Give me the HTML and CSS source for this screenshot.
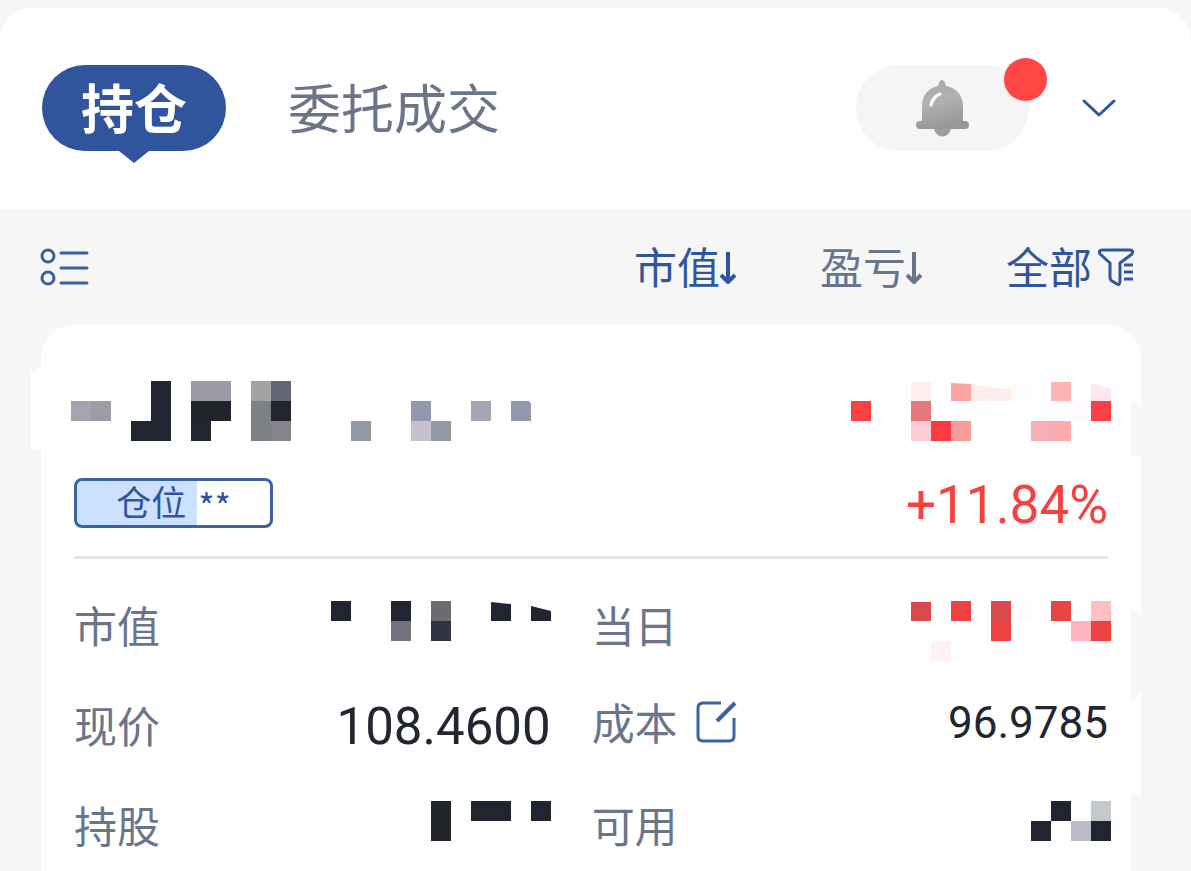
FILE: index.html
```
<!DOCTYPE html>
<html lang="zh-CN">
<head>
  <meta charset="UTF-8" />
  <meta name="viewport" content="width=device-width, initial-scale=1.0" />
  <title>持仓</title>
  <link rel="stylesheet" href="styles.css">
</head>
<body>
  <header class="top-bar">
    <nav class="tabs">
      <button class="tab active">持仓</button>
      <button class="tab">委托成交</button>
    </nav>
    <div class="top-actions">
      <button class="bell-btn" aria-label="消息">
        <svg width="54" height="56" viewBox="0 0 54 56">
          <defs>
            <linearGradient id="bell" x1="0" y1="0" x2="0.3" y2="1">
              <stop offset="0" stop-color="#a6a6a6" />
              <stop offset="0.5" stop-color="#b2b2b2" />
              <stop offset="1" stop-color="#989898" />
            </linearGradient>
          </defs>
          <path d="M18 47a8 9 0 0 0 17 0z" fill="#9c9c9c" />
          <path d="M26 0c-2 0-3 2-4 6C12 8 6 16 6 26v15H4a4 4 0 0 0 0 8h45a4 4 0 0 0 0-8h-2V26c0-10-6-18-17-20C29 2 28 0 26 0z" fill="url(#bell)" />
          <path d="M15 25c1-5 4-9 9-11" fill="none" stroke="#fff" stroke-width="3" stroke-linecap="round" />
        </svg>
        <span class="dot"></span>
      </button>
      <button class="icon-btn" aria-label="展开">
        <svg width="34" height="18" viewBox="0 0 34 18">
          <path d="M2 2l15 14L32 2" fill="none" stroke="#30559c" stroke-width="3" stroke-linecap="round" stroke-linejoin="round" />
        </svg>
      </button>
    </div>
  </header>

  <div class="toolbar">
    <button class="icon-btn" aria-label="列表">
      <svg width="50" height="40" viewBox="0 0 50 40" fill="none" stroke="#3c609f" stroke-width="3">
        <circle cx="8" cy="9" r="6" />
        <circle cx="8" cy="31" r="6" />
        <path d="M21 6h26M21 21h26M21 36h26" stroke-linecap="round" />
      </svg>
    </button>
    <div class="sorts">
      <button class="sort active">市值<svg width="16" height="36" viewBox="0 0 16 36"><path d="M8 3v30M1 26l7 7 7-7" fill="none" stroke="currentColor" stroke-width="4" stroke-linejoin="round" /></svg></button>
      <button class="sort">盈亏<svg width="16" height="36" viewBox="0 0 16 36"><path d="M8 3v30M1 26l7 7 7-7" fill="none" stroke="currentColor" stroke-width="4" stroke-linejoin="round" /></svg></button>
      <button class="sort filter active">全部<svg width="36" height="38" viewBox="0 0 36 38" fill="none" stroke="currentColor" stroke-width="3" stroke-linejoin="round"><path d="M4 2h28c3 0 3 2 2 4L22 15v18c0 3-1 4-3 3l-5-3c-2-1-2-2-2-4V15L2 6C1 4 1 2 4 2z" /><path d="M26 17h9M26 24h9M26 31h9" /></svg></button>
    </div>
  </div>

  <main class="card">
    <svg class="edge edge-left" width="10" height="546" viewBox="0 0 10 546" fill="#fff">
      <path d="M0 46l3-1 7-5v86l-10-2z" />
    </svg>
    <svg class="edge edge-right" width="10" height="546" viewBox="0 0 10 546" fill="#f6f6f7">
      <path d="M0 75l10 6v50l-10 1zM0 284l10 5v78q-4 6-10 9zM0 467l10 5v74H0z" />
    </svg>

    <div class="card-head">
      <svg width="460" height="60" viewBox="0 0 460 60" shape-rendering="crispEdges">
        <path d="M0 20h20v20H0z" fill="#a4a4ae" />
        <path d="M20 20h20v20H20z" fill="#9c9ca4" />
        <path d="M80 0h20v60H60V40h20zM120 40h20v20h-20zM200 20h20v20h-20z" fill="#212530" />
        <path d="M120 0h40v20h-40z" fill="#9c9aa6" />
        <path d="M120 20h40v20h-40z" fill="#212529" />
        <path d="M180 0h20v20h-20z" fill="#a4a1a4" />
        <path d="M200 0h20v20h-20z" fill="#646573" />
        <path d="M180 20h20v40h-20z" fill="#7c8283" />
        <path d="M200 40h20v20h-20z" fill="#848389" />
        <path d="M280 40h20v20h-20zM360 40h20v20h-20z" fill="#9399a4" />
        <path d="M340 20h20v20h-20zM440 20h17l3 3v17h-20z" fill="#9399ad" />
        <path d="M340 40h20v20h-20z" fill="#c5c1ce" />
        <path d="M400 20h20v20h-20z" fill="#a4a5b4" />
      </svg>
      <svg width="260" height="60" viewBox="0 0 260 60">
        <path d="M0 20h20v20H0zM240 20h20v20h-20z" fill="#f94143" />
        <path d="M60 1h20v19H60z" fill="#ffefee" />
        <path d="M60 20h20v20H60z" fill="#e4787c" />
        <path d="M60 40h20v20H60z" fill="#ffccd5" />
        <path d="M80 40h20v20H80z" fill="#f93c40" />
        <path d="M100 40h20v20h-20z" fill="#f69c9b" />
        <path d="M100 2l20 1v17h-20z" fill="#ffa4a3" />
        <path d="M120 3l31 5 9-2v14h-40z" fill="#ffedeb" />
        <path d="M160 6l20-4v18h-20zM220 20h20v20h-20z" fill="#fffaff" />
        <path d="M200 1h20v19h-20z" fill="#ffb3b3" />
        <path d="M240 2l20 6v12h-20z" fill="#ffe8ed" />
        <path d="M180 40h20v20h-20z" fill="#f6b0b5" />
        <path d="M200 40h20v20h-20z" fill="#ffabab" />
      </svg>
    </div>

    <div class="card-sub">
      <div class="position"><span>仓位</span><span class="stars">**</span></div>
      <div class="rate">+11.84%</div>
    </div>

    <dl class="details">
      <div class="item">
        <dt>市值</dt>
        <dd>
          <svg width="220" height="50" viewBox="0 0 220 50" fill="#212530">
            <path d="M0 0h20v20H0zM60 0h20v20H60zM160 1l20 2v17h-20zM200 5l20 5v10h-20z" />
            <path d="M60 20h20v20H60z" fill="#74717c" />
            <path d="M100 0h20v20h-20z" fill="#6c6d71" />
            <path d="M100 20h20v20h-20z" fill="#313541" />
          </svg>
        </dd>
      </div>
      <div class="item">
        <dt>当日</dt>
        <dd class="masked">
          <svg width="200" height="50" viewBox="0 0 200 50">
            <path d="M0 1h20v19H0zM80 0h20v20H80z" fill="#dc494b" />
            <path d="M40 0h20v20H40zM80 20h20v20H80zM180 20h20v20h-20z" fill="#ee4142" />
            <path d="M140 0h20v20h-20z" fill="#e64542" />
            <path d="M100 0h20v20h-20z" fill="#fffaff" />
            <path d="M180 0h20v20h-20z" fill="#ffc0c4" />
            <path d="M160 20h20v20h-20z" fill="#ffb3bd" />
            <path d="M20 40h20v20H20z" fill="#fff1f6" />
          </svg>
        </dd>
      </div>
      <div class="item">
        <dt>现价</dt>
        <dd class="price">108.4600</dd>
      </div>
      <div class="item editable">
        <dt>成本
          <button class="icon-btn" aria-label="修改成本">
            <svg width="42" height="42" viewBox="0 0 42 42" fill="none" stroke="#3c62a6" stroke-width="3">
              <path d="M26 3H8Q3 3 3 8v28q0 5 5 5h26q5 0 5-5V18" />
              <path d="M22 21L40 3" stroke-width="4" />
            </svg>
          </button>
        </dt>
        <dd>96.9785</dd>
      </div>
      <div class="item">
        <dt>持股</dt>
        <dd>
          <svg width="120" height="50" viewBox="0 0 120 50" fill="#212530">
            <path d="M0 0h20v40H0z" fill="#212529" />
            <path d="M40 0h40v20H40zM100 0h20v20h-20z" />
          </svg>
        </dd>
      </div>
      <div class="item">
        <dt>可用</dt>
        <dd class="masked">
          <svg width="80" height="50" viewBox="0 0 80 50" fill="#212530">
            <path d="M20 0h20v20H20zM0 20h20v20H0zM60 20h20v20H60z" />
            <path d="M60 0h20v20H60z" fill="#c5c9cc" />
            <path d="M40 20h20v20H40z" fill="#bcbcc5" />
          </svg>
        </dd>
      </div>
    </dl>
  </main>
</body>
</html>
```
FILE: styles.css
```
* {
  box-sizing: border-box;
}
body {
  margin: 0;
  padding-top: 8px;
  background-color: #f6f6f7;
  color: #212631;
  font-family: Roboto, "Noto Sans CJK SC", sans-serif;
  overflow-x: hidden;
}
button {
  padding: 0;
  border: 0;
  background: none;
  color: inherit;
  font: inherit;
  cursor: pointer;
}
svg {
  display: block;
  flex-shrink: 0;
  overflow: visible;
}
.icon-btn {
  display: flex;
}

/* Header */
.top-bar {
  display: flex;
  justify-content: space-between;
  align-items: center;
  padding: 57px 75px 58px 42px;
  background-color: #fff;
  border-radius: 32px 32px 0 0;
}
.tabs {
  display: flex;
  gap: 62px;
}
.tab {
  height: 86px;
  padding-top: 6px;
  color: #6b758a;
  font-size: 53px;
  line-height: 80px;
}
.tab.active {
  position: relative;
  padding: 6px 39px 0;
  border-radius: 43px;
  background-color: #30559c;
  color: #fff;
  font-weight: bold;
}
.tab.active::after {
  content: "";
  position: absolute;
  left: 50%;
  top: 100%;
  margin-left: -15px;
  border: 15px solid transparent;
  border-top: 12px solid #30559c;
  border-bottom: 0;
}
.top-actions {
  display: flex;
  align-items: center;
  gap: 53px;
}
.bell-btn {
  position: relative;
  display: flex;
  justify-content: center;
  align-items: center;
  width: 173px;
  height: 86px;
  border-radius: 43px;
  background-color: #f5f5f6;
}
.dot {
  position: absolute;
  top: -7px;
  right: -18px;
  width: 43px;
  height: 43px;
  border-radius: 50%;
  background-color: #ff4642;
}

/* Sort bar */
.toolbar {
  display: flex;
  justify-content: space-between;
  align-items: center;
  height: 116px;
  padding: 0 57px 0 40px;
}
.sorts {
  display: flex;
  gap: 84px;
}
.sort {
  display: flex;
  align-items: center;
  padding-top: 4px;
  color: #6b758a;
  font-size: 43px;
  line-height: 60px;
}
.sort svg {
  margin-bottom: 4px;
}
.sort.active {
  color: #30559c;
}
.filter svg {
  margin-left: 6px;
}

/* Holding card */
.card {
  position: relative;
  margin: 0 50px 0 41px;
  padding: 56px 33px 0;
  border-radius: 32px 32px 0 0;
  background-color: #fff;
}
.edge {
  position: absolute;
  top: 0;
}
.edge-left {
  left: -10px;
}
.edge-right {
  right: 0;
}
.card-head {
  display: flex;
  justify-content: space-between;
  margin: 0 -3px;
}
.card-sub {
  display: flex;
  justify-content: space-between;
  align-items: center;
  height: 118px;
  padding-top: 8px;
  border-bottom: 3px solid #e6e6e8;
}
.position {
  display: flex;
  justify-content: center;
  gap: 12px;
  width: 199px;
  height: 50px;
  border: 3px solid #3c62a6;
  border-radius: 8px;
  background: linear-gradient(to right, #cce1ff 62%, #fff 62%);
  color: #30559c;
  font-size: 35px;
  line-height: 48px;
}
.stars {
  font-family: "Noto Sans CJK SC", sans-serif;
}
.rate {
  padding-top: 4px;
  color: #f44141;
  font-size: 53px;
}
.details {
  display: grid;
  grid-template-columns: 12fr 13fr;
  column-gap: 41px;
  margin: 0;
  padding-top: 17px;
}
.item {
  display: flex;
  justify-content: space-between;
  align-items: center;
  height: 100px;
}
.editable {
  padding-bottom: 6px;
}
dt {
  display: flex;
  align-items: center;
  gap: 17px;
  padding-bottom: 4px;
  color: #6b758a;
  font-size: 43px;
}
dd {
  margin: 0;
  font-size: 44px;
}
.price {
  font-size: 51px;
}
.masked {
  margin-right: -3px;
}
```
